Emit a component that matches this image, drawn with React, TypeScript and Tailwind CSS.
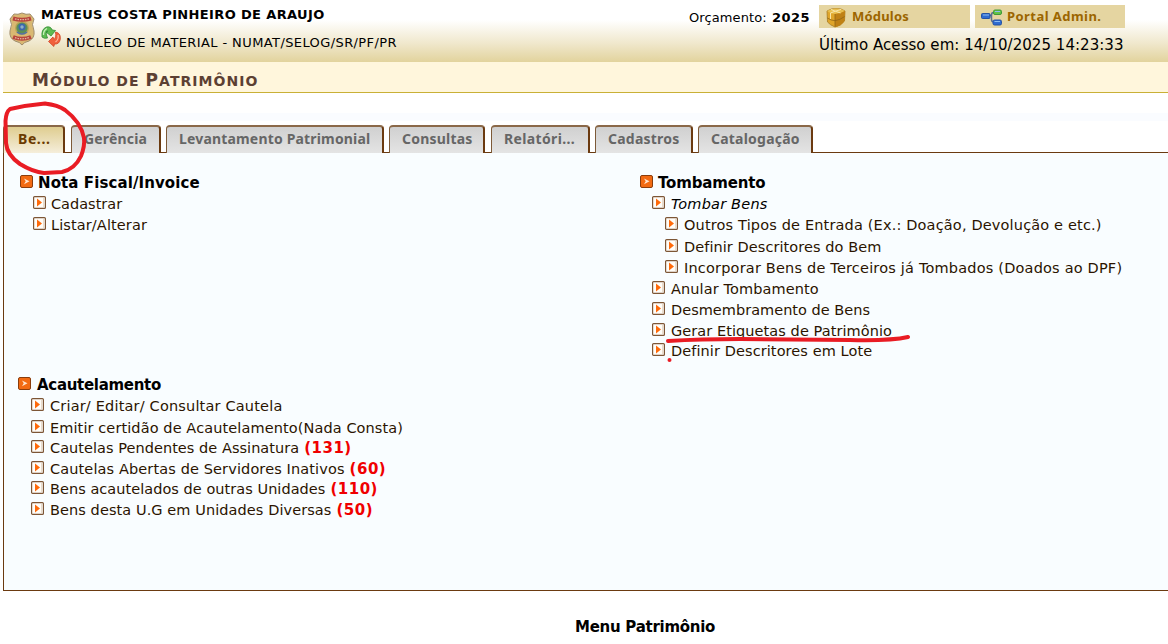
import React from "react";

function Shield() {
  return (
    <svg width="26" height="34" viewBox="0 0 26 34">
      <path d="M5 2Q9 3 13 1Q17 3 21 2L25 7Q22 12 25 19Q26 26 20 29Q15 30 13 33Q11 30 6 29Q0 26 1 19Q4 12 1 7Z" fill="#d9b872" stroke="#a08c6c" strokeWidth="1" />
      <circle cx="13" cy="16" r="7" fill="#b9a458" />
      <circle cx="13" cy="16" r="5.6" fill="#5c8f55" />
      <circle cx="13" cy="15" r="3.6" fill="#3d67ad" />
      <circle cx="13" cy="15" r="1.7" fill="#8fb0c4" />
      <path d="M8 20Q13 24 18 20" stroke="#5271a5" strokeWidth="1.6" fill="none" />
      <path d="M4 6.5Q13 9 22 6.5" stroke="#b8443c" strokeWidth="4" fill="none" />
      <path d="M6 6.8Q13 8.6 20 6.8" stroke="#e3b7a0" strokeWidth="1.2" strokeDasharray="1.5 1" fill="none" />
      <path d="M4 25Q13 28.5 22 25" stroke="#b8443c" strokeWidth="4" fill="none" />
      <path d="M6 25.6Q13 28 20 25.6" stroke="#e3b7a0" strokeWidth="1.2" strokeDasharray="1.5 1" fill="none" />
    </svg>
  );
}

function Swap() {
  return (
    <svg width="20" height="21" viewBox="0 0 20 21">
      <path d="M1 11Q0 3 5.500 1Q9.500 0 11.300 4L14.500 4.500L10 10L5 6L7 5Q5 5 5.200 8L6.500 12Q3 13 1 11Z" fill="#5dbb50" stroke="#2f8a35" strokeWidth=".8" />
      <path d="M2.500 9Q2.300 4.500 6 2.500" stroke="#c9f0bd" strokeWidth="1.300" fill="none" />
      <path d="M14.500 6Q20 7 19.300 13Q18.500 18.500 13.500 18L12.800 20.500L7.500 15.500L12 11L12.800 13.500Q15.500 12 14.500 6Z" fill="#f0603c" stroke="#cf4527" strokeWidth=".8" />
      <path d="M17 9Q18 13.500 14.500 16" stroke="#ffb59c" strokeWidth="1.200" fill="none" />
    </svg>
  );
}

function Box() {
  return (
    <svg width="20" height="20" viewBox="0 0 20 20">
      <path d="M1 3Q6 0 10 .5Q15 0 19 3L18.500 13Q15 18 9 19Q4 17 1.500 14Z" fill="#dfa52a" stroke="#a87b24" strokeWidth=".8" />
      <path d="M1 3Q6 0 10 .5Q15 0 19 3Q14 6 9 6Q4 5.500 1 3Z" fill="#e8bf50" />
      <path d="M9 6V19Q15 18 18.500 13L19 3Q14 6 9 6Z" fill="#bf8116" />
      <path d="M1.300 10Q5 12.500 9 12.700Q14 12 18.700 8.500M9 6V18.500" stroke="#8f6416" strokeWidth=".8" fill="none" />
      <path d="M4.500 5V11M5 1.500Q10 3.500 14.500 5M15 1.500Q9 3 4.500 5" stroke="#f8e6a8" strokeWidth="1" fill="none" />
    </svg>
  );
}

function Nodes() {
  return (
    <svg width="21" height="17" viewBox="0 0 21 17">
      <path d="M9 6.500H10.500M14 3.500H12.500Q10.500 3.500 10.500 6V10.500Q10.500 13 13 13" stroke="#5c6f92" strokeWidth="1.500" fill="none" />
      <rect x=".5" y="4.500" width="8.500" height="5" rx="1" fill="#2f6bd0" stroke="#2452a3" />
      <rect x="12.500" y="1" width="8" height="4.500" rx="1.500" fill="#62c247" stroke="#3e9a36" />
      <rect x="12" y="11" width="8.500" height="5" rx="1.500" fill="#2f6bd0" stroke="#2452a3" />
      <path d="M2 6H8M14 2.500H19M13.500 12.500H19" stroke="#8dbbf0" strokeWidth="1" />
    </svg>
  );
}

function Bullet({ solid = false }: { solid?: boolean }) {
  return solid ? (
    <svg width="13" height="13" viewBox="0 0 13 13" className="shrink-0">
      <rect x=".5" y=".5" width="12" height="12" rx="1.500" fill="#f26a12" stroke="#8a3d0c" />
      <path d="M4 3.500L9.500 6.300L4 9.200L5.700 6.300Z" fill="#ffe6d0" />
    </svg>
  ) : (
    <svg width="13" height="13" viewBox="0 0 13 13" className="shrink-0">
      <rect x=".6" y=".6" width="11.800" height="11.800" rx="1" fill="#fffdf8" stroke="#7d5636" strokeWidth="1.200" />
      <path d="M4 2.500L9 6.500L4 10.500Z" fill="#ff6a0a" />
      <path d="M10.500 2V11" stroke="#eadccb" strokeWidth="1" />
    </svg>
  );
}

type RowProps = { h?: string; pad?: string; track?: string; italic?: boolean; count?: string; children: React.ReactNode };

function Row({ h = "h-[21px]", pad = "pl-[13px]", track = "tracking-[0.11px]", italic = false, count, children }: RowProps) {
  return (
    <div className={`flex items-center whitespace-nowrap text-[14.5px] leading-[20px] text-[#2b1400] ${h} ${pad}`}>
      <span className="mr-[5px] flex pb-[3px]"><Bullet /></span>
      <span className={`${italic ? "italic text-black" : ""} ${track}`}>{children}</span>
      {count && <b className="ml-[5px] text-[15px] tracking-[0.5px] text-[#f00000]">{count}</b>}
    </div>
  );
}

function Heading({ children, track }: { children: React.ReactNode; track: string }) {
  return (
    <div className="flex h-[21px] items-center whitespace-nowrap text-[15px] font-bold leading-[20px] text-black">
      <span className="mr-[5px] flex pb-[2px]"><Bullet solid /></span>
      <span className={track}>{children}</span>
    </div>
  );
}

const tabs = [
  { label: "Be...", box: "w-[62px] mr-[6px] pl-[13px] tracking-[0.6px]" },
  { label: "Gerência", box: "w-[90px] mr-[5px] pl-[11px] tracking-[0.17px]" },
  { label: "Levantamento Patrimonial", box: "w-[218px] mr-[5px] pl-[11px] tracking-[0.17px]" },
  { label: "Consultas", box: "w-[96px] mr-[6px] pl-[11px] tracking-[0.22px]" },
  { label: "Relatóri...", box: "w-[99px] mr-[5px] pl-[11px] tracking-[0.35px]" },
  { label: "Cadastros", box: "w-[98px] mr-[5px] pl-[11px] tracking-[0.22px]" },
  { label: "Catalogação", box: "w-[115px] pl-[11px] tracking-[0.22px]" },
];

export default function App() {
  return (
    <div className="relative h-[644px] w-[1168px] overflow-hidden bg-white pl-[3px] font-['Verdana','DejaVu_Sans',sans-serif] text-black">
      <header className="flex h-[62px] bg-[linear-gradient(to_bottom,#fff_0,#fff_20px,#f0e8cd_43px,#e2d39d_62px)]">
        <div className="pl-[6px] pt-[12px]"><Shield /></div>
        <div className="w-[647px] whitespace-nowrap pl-[6px] pt-[5px]">
          <div className="h-[20px] text-[13px] font-bold leading-[20px] tracking-[0.36px]">MATEUS COSTA PINHEIRO DE ARAUJO</div>
          <div className="flex pt-[1px]">
            <Swap />
            <span className="ml-[5px] pt-[7px] text-[13px] leading-[20px] tracking-[0.4px]">NÚCLEO DE MATERIAL - NUMAT/SELOG/SR/PF/PR</span>
          </div>
        </div>
        <div className="w-[134px] whitespace-nowrap pl-[7px] pt-[8px] text-[13px] leading-[20px] tracking-[0.1px]">
          Orçamento: <b className="ml-px tracking-[0.5px]">2025</b>
        </div>
        <div className="whitespace-nowrap pl-[3px] pt-[5px]">
          <div className="flex gap-[5px] font-['Tahoma','Noto_Sans',sans-serif] text-[13px] font-bold leading-[23px] text-[#9c6500]">
            <div className="flex h-[23px] w-[151px] bg-[#e5d5a1] pl-[7px]">
              <span className="pt-[3px]"><Box /></span><span className="ml-[6px] tracking-[0.2px]">Módulos</span>
            </div>
            <div className="flex h-[23px] w-[150px] bg-[#e5d5a1] pl-[6px]">
              <span className="pt-[4px]"><Nodes /></span><span className="ml-[5px] tracking-[0.45px]">Portal Admin.</span>
            </div>
          </div>
          <div className="pt-[6px] text-[15px] leading-[22px] tracking-[0.04px]">Último Acesso em: 14/10/2025 14:23:33</div>
        </div>
      </header>
      <div className="h-[31px] border-b border-[#c9b036] bg-[#fff6dc] pl-[29px] pt-[4px] text-[14px] font-bold uppercase leading-[28px] tracking-[1.05px] text-[#5c4033]">
        <span className="text-[17px]">M</span>ódulo de <span className="text-[17px]">P</span>atrimônio
      </div>
      <div className="mt-[20px] h-[8px] bg-[#fafcff]" />
      <nav className="mt-[4px] flex h-[28px]">
        {tabs.map((t, i) => (
          <div key={t.label} className={`${t.box} relative h-[28px] shrink-0 whitespace-nowrap rounded-t-[4px] border-l border-r-2 border-t-2 border-l-[#7d5a38] border-r-[#6b3a10] border-t-[#8a6848] font-['Tahoma','Noto_Sans',sans-serif] text-[14px] font-bold leading-[24px] ${i === 0 ? "bg-[linear-gradient(#dfcd90,#f5eedb)] text-[#6b3a00]" : "bg-[linear-gradient(#d0d0d0,#e4e4e4)] text-[#666]"}`}>
            <span className="ml-px">{t.label}</span>
            {i < 6 && <span className="absolute -right-[8px] bottom-0 h-px w-[7px] bg-[#6b3a10]" />}
          </div>
        ))}
        <div className="flex-1 border-b border-[#6b3a10]" />
      </nav>
      <main className="flex h-[438px] border-b border-l border-[#6b3a10] bg-[#f9fdff]">
        <section className="w-[636px] pt-[19px]">
          <div className="pl-[16px]">
            <Heading track="tracking-[0.1px]">Nota Fiscal/Invoice</Heading>
            <Row track="tracking-[0px]">Cadastrar</Row>
            <Row>Listar/Alterar</Row>
          </div>
          <div className="mt-[139px] pl-[14px]">
            <Heading track="tracking-[-0.3px] ml-px">Acautelamento</Heading>
            <Row h="h-[22px]" track="ml-px tracking-[0.18px]">Criar/ Editar/ Consultar Cautela</Row>
            <Row track="ml-px tracking-[0.1px]">Emitir certidão de Acautelamento(Nada Consta)</Row>
            <Row h="h-[20px]" count="(131)" track="ml-px tracking-[0.04px]">Cautelas Pendentes de Assinatura</Row>
            <Row count="(60)" track="ml-px tracking-[0.12px]">Cautelas Abertas de Servidores Inativos</Row>
            <Row h="h-[20px]" count="(110)" track="ml-px tracking-[0.04px]">Bens acautelados de outras Unidades</Row>
            <Row count="(50)" track="ml-px tracking-[0.08px]">Bens desta U.G em Unidades Diversas</Row>
          </div>
        </section>
        <section className="pt-[19px]">
          <Heading track="tracking-[-0.15px]">Tombamento</Heading>
          <Row pad="pl-[12px]" italic track="ml-px tracking-[0.2px]">Tombar Bens</Row>
          <Row pad="pl-[25px]" h="h-[22px]" track="ml-px tracking-[0.16px]">Outros Tipos de Entrada (Ex.: Doação, Devolução e etc.)</Row>
          <Row pad="pl-[25px]" track="ml-px tracking-[0.07px]">Definir Descritores do Bem</Row>
          <Row pad="pl-[25px]" track="ml-px tracking-[0.19px]">Incorporar Bens de Terceiros já Tombados (Doados ao DPF)</Row>
          <Row pad="pl-[12px]" h="h-[22px]" track="ml-px tracking-[0.1px]">Anular Tombamento</Row>
          <Row pad="pl-[12px]" h="h-[20px]" track="ml-px tracking-[0.02px]">Desmembramento de Bens</Row>
          <Row pad="pl-[12px]" track="ml-px tracking-[0.07px]">Gerar Etiquetas de Patrimônio</Row>
          <Row pad="pl-[12px]" h="h-[20px]" track="ml-px tracking-[0.09px]">Definir Descritores em Lote</Row>
        </section>
      </main>
      <footer className="whitespace-nowrap pl-[572px] pt-[25px] text-[15px] font-bold leading-[22px] tracking-[-0.27px]">Menu Patrimônio</footer>
      <svg className="pointer-events-none absolute left-0 top-0" width="1168" height="644" fill="none" stroke="#e91c24" strokeWidth="4" strokeLinecap="round" strokeLinejoin="round">
        <path d="M53 105L45 103.500Q28 105 10 109Q6 112 5.500 121L6 143Q7 155 20 164Q33 172 44 173L62 172Q75 169 81 156Q85 146 84 138Q81 122 65 110Q58 105 45 103.500" />
        <path d="M668 341Q700 339 740 339L850 340Q890 341 908 337" />
        <path d="M669.500 360V360.100" />
      </svg>
    </div>
  );
}
